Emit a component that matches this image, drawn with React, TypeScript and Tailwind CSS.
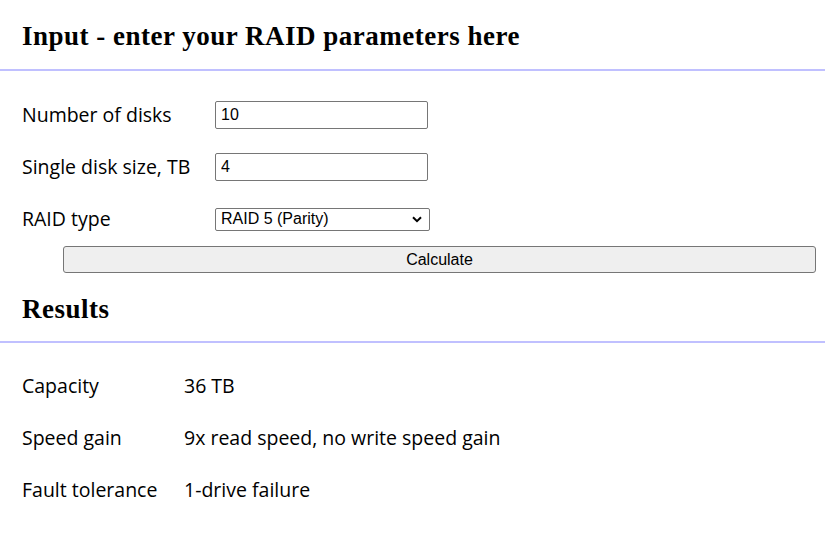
import React from "react";

const labelFont = "[font-family:'Open_Sans','Noto_Sans',sans-serif]";

export default function App() {
  return (
    <div className="w-[825px] h-[557px] bg-white text-black overflow-hidden">
      <div className="h-[71px] border-b-2 border-[#c0c0ff] pl-[22px] pt-[20px]">
        <h2 className="[font-family:'Liberation_Serif',serif] font-bold text-[27px] leading-[32px] tracking-[0.5px]">
          Input - enter your RAID parameters here
        </h2>
      </div>

      <div className={`mt-[18px] pl-[22px] ${labelFont} text-[19.5px]`}>
        <div className="flex items-center h-[52px]">
          <label className="w-[193px]">Number of disks</label>
          <input
            defaultValue="10"
            className="w-[213px] h-[28px] border border-[#767676] rounded-[2px] px-[5px] text-[16px] [font-family:'Liberation_Sans',Arial,sans-serif]"
          />
        </div>
        <div className="flex items-center h-[52px]">
          <label className="w-[193px]">Single disk size, TB</label>
          <input
            defaultValue="4"
            className="w-[213px] h-[28px] border border-[#767676] rounded-[2px] px-[5px] text-[16px] [font-family:'Liberation_Sans',Arial,sans-serif]"
          />
        </div>
        <div className="flex items-center h-[52px]">
          <label className="w-[193px]">RAID type</label>
          <div className="relative w-[215px] h-[23px] border border-[#767676] rounded-[2px] flex items-center px-[5px] text-[16px] [font-family:'Liberation_Sans',Arial,sans-serif]">
            <span>RAID 5 (Parity)</span>
            <svg
              className="absolute right-[7px] top-[7px]"
              width="10"
              height="7"
              viewBox="0 0 10 7"
            >
              <path d="M1 1.2 L5 5.2 L9 1.2" fill="none" stroke="#000" strokeWidth="2" />
            </svg>
          </div>
        </div>
      </div>

      <div className="mt-[1px] ml-[63px] mr-[9px]">
        <button className="w-full h-[27px] bg-[#efefef] border border-[#767676] rounded-[3px] text-[16px] [font-family:'Liberation_Sans',Arial,sans-serif]">
          Calculate
        </button>
      </div>

      <div className="h-[70px] border-b-2 border-[#c0c0ff] pl-[22px] pt-[20px]">
        <h3 className="[font-family:'Liberation_Serif',serif] font-bold text-[27px] leading-[32px] tracking-[0.5px]">
          Results
        </h3>
      </div>

      <div className={`mt-[17px] pl-[22px] ${labelFont} text-[19.5px]`}>
        <div className="flex items-center h-[52px]">
          <span className="w-[162px]">Capacity</span>
          <span>36 TB</span>
        </div>
        <div className="flex items-center h-[52px]">
          <span className="w-[162px]">Speed gain</span>
          <span>9x read speed, no write speed gain</span>
        </div>
        <div className="flex items-center h-[52px]">
          <span className="w-[162px]">Fault tolerance</span>
          <span>1-drive failure</span>
        </div>
      </div>
    </div>
  );
}
